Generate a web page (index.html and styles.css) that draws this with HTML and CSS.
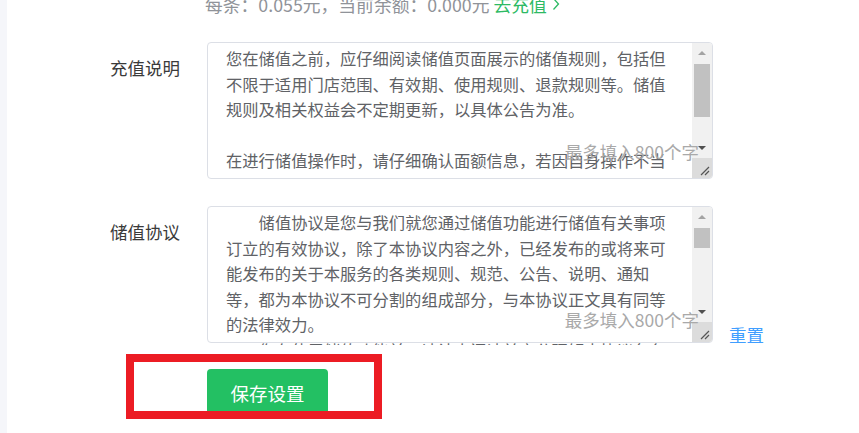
FILE: index.html
```html
<!DOCTYPE html>
<html lang="zh-CN">
<head>
<meta charset="utf-8">
<title>储值设置</title>
<link rel="stylesheet" href="styles.css">
</head>
<body>
<div class="layout">
  <aside class="side"></aside>
  <main class="main">
    <div class="tip">每条：0.055元，当前余额：0.000元 <a class="recharge">去充值<svg class="chev" viewBox="0 0 8 14" width="8" height="14"><path d="M1.5 1.5 L6.5 7 L1.5 12.5" fill="none" stroke="currentColor" stroke-width="1.3"/></svg></a></div>

    <div class="form-row row-first">
      <div class="label">充值说明</div>
      <div class="ta">
        <div class="ta-text">
          <div class="line">您在储值之前，应仔细阅读储值页面展示的储值规则，包括但</div>
          <div class="line">不限于适用门店范围、有效期、使用规则、退款规则等。储值</div>
          <div class="line">规则及相关权益会不定期更新，以具体公告为准。</div>
          <div class="line">&nbsp;</div>
          <div class="line">在进行储值操作时，请仔细确认面额信息，若因自身操作不当</div>
          <div class="line">等原因造成金额错误，导致的损失由用户自行承担相关责任。</div>
        </div>
        <div class="sb">
          <div class="sb-btn"><span class="arr arr-up"></span></div>
          <div class="sb-track"><div class="sb-thumb thumb-long"></div></div>
          <div class="sb-btn"><span class="arr arr-down"></span></div>
          <div class="sb-corner"><svg viewBox="0 0 20 20" width="20" height="20"><path d="M9 17 L17 9 M13 17 L17 13" stroke="#555" stroke-width="1.2"/></svg></div>
        </div>
        <span class="counter counter-a">最多填入800个字</span>
      </div>
    </div>

    <div class="form-row">
      <div class="label">储值协议</div>
      <div class="ta">
        <div class="ta-text ta-spill">
          <div class="line indent">储值协议是您与我们就您通过储值功能进行储值有关事项</div>
          <div class="line">订立的有效协议，除了本协议内容之外，已经发布的或将来可</div>
          <div class="line">能发布的关于本服务的各类规则、规范、公告、说明、通知</div>
          <div class="line">等，都为本协议不可分割的组成部分，与本协议正文具有同等</div>
          <div class="line">的法律效力。</div>
          <div class="line indent">您在使用储值功能前，请认真阅读并充分理解本协议各条</div>
        </div>
        <div class="sb">
          <div class="sb-btn"><span class="arr arr-up"></span></div>
          <div class="sb-track"><div class="sb-thumb thumb-short"></div></div>
          <div class="sb-btn"><span class="arr arr-down"></span></div>
          <div class="sb-corner"><svg viewBox="0 0 20 20" width="20" height="20"><path d="M9 17 L17 9 M13 17 L17 13" stroke="#555" stroke-width="1.2"/></svg></div>
        </div>
        <span class="counter counter-b">最多填入800个字</span>
      </div>
      <a class="reset">重置</a>
    </div>

    <div class="actions">
      <button class="save">保存设置</button>
      <div class="mark"></div>
    </div>
  </main>
</div>
</body>
</html>
```

FILE: styles.css
```css
* { box-sizing: border-box; }
html, body {
  margin: 0;
  padding: 0;
  background: #fff;
  height: 433px;
  overflow: hidden;
  font-family: "Noto Sans CJK SC", "Noto Sans", sans-serif;
}
.layout {
  display: flex;
  height: 433px;
}
.side {
  width: 7px;
  flex: none;
  background: #f5f6fa;
}
.main {
  flex: 1;
  padding-left: 103px;
}
.tip {
  margin-top: -7px;
  padding-left: 95px;
  font-size: 17.8px;
  line-height: 22px;
  color: #909399;
  white-space: nowrap;
}
.recharge {
  color: #2dba64;
  display: inline-flex;
  align-items: center;
  gap: 5px;
}
.chev { display: block; }
.form-row {
  display: flex;
  align-items: flex-start;
  margin-top: 27px;
}
.row-first { margin-top: 27px; }
.label {
  width: 97px;
  flex: none;
  font-size: 17.5px;
  line-height: 25px;
  padding-top: 13px;
  color: #3a3a3a;
}
.ta {
  position: relative;
  width: 506px;
  height: 137px;
  border: 1px solid #dcdfe6;
  border-radius: 4px;
  background: #fff;
  display: flex;
}
.ta-text {
  flex: 1;
  height: 135px;
  overflow: hidden;
  padding: 3px 0 0 18px;
  font-size: 16.3px;
  line-height: 25.5px;
  color: #606266;
}
.ta-spill { height: 138px; }
.line { white-space: nowrap; }
.indent { text-indent: 2em; }
.sb {
  width: 20px;
  flex: none;
  display: flex;
  flex-direction: column;
  background: #f1f1f1;
  border-radius: 0 3px 3px 0;
  overflow: hidden;
}
.sb-btn {
  height: 20px;
  display: flex;
  align-items: center;
  justify-content: center;
}
.arr {
  width: 0;
  height: 0;
  border-left: 4px solid transparent;
  border-right: 4px solid transparent;
}
.arr-up { border-bottom: 4px solid #a3a3a3; }
.arr-down { border-top: 4px solid #505050; }
.sb-track {
  height: 75px;
  padding: 1px 2px 0;
}
.sb-thumb {
  background: #c1c1c1;
}
.thumb-long { height: 53px; }
.thumb-short { height: 20px; }
.sb-corner {
  height: 20px;
  background: #dcdcdc;
}
.sb-corner svg { display: block; }
.counter {
  position: absolute;
  right: 13px;
  font-size: 17.5px;
  line-height: 20px;
  color: #a9a9a9;
  white-space: nowrap;
}
.counter-a { bottom: 16px; }
.counter-b { bottom: 12px; }
.reset {
  align-self: flex-end;
  margin-left: 16px;
  font-size: 17.5px;
  line-height: 17px;
  color: #409eff;
}
.actions {
  position: relative;
  margin-top: 26px;
  padding-left: 97px;
}
.save {
  display: block;
  width: 121px;
  height: 48px;
  border: none;
  border-radius: 4px;
  background: #23c063;
  color: #fff;
  font-family: "Noto Sans CJK SC", "Noto Sans", sans-serif;
  font-size: 18.5px;
  padding: 0;
}
.mark {
  position: absolute;
  left: 16px;
  top: -15px;
  width: 256px;
  height: 65px;
  border: 8px solid #ec1c24;
}
```
